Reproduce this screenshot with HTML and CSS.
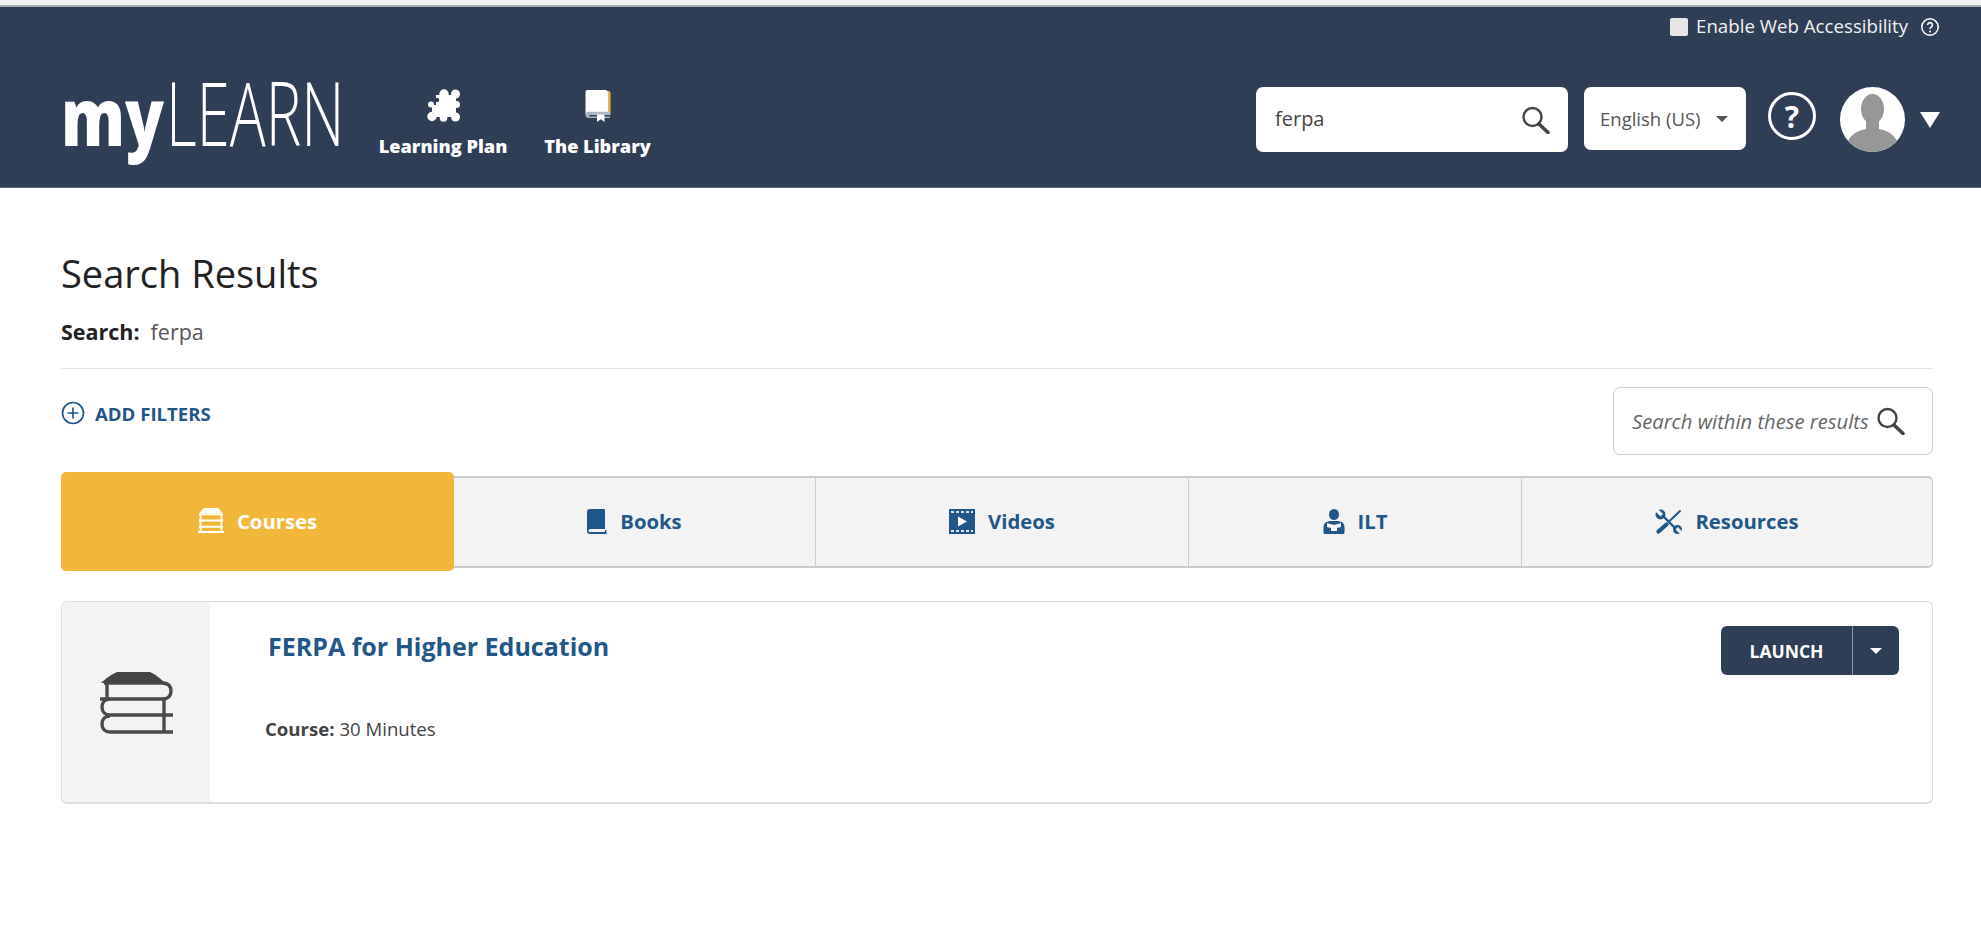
FILE: index.html
```html
<!DOCTYPE html>
<html lang="en">
<head>
<meta charset="utf-8">
<title>myLEARN Search Results</title>
<link rel="stylesheet" href="styles.css">
</head>
<body>
<div class="browser-strip"></div>
<header class="site-header">
  <div class="access-row">
    <span class="access-check"></span>
    <span class="access-label">Enable Web Accessibility</span>
    <svg class="access-help" viewBox="0 0 20 20"><circle cx="10" cy="10" r="8.2" fill="none" stroke="#fff" stroke-width="1.6"/><path d="M7.6 8a2.4 2.4 0 1 1 3.6 2.1c-.8.5-1.2.9-1.2 1.9" fill="none" stroke="#fff" stroke-width="1.6"/><circle cx="10" cy="14.6" r="1" fill="#fff"/></svg>
  </div>
  <div class="main-row">
    <div class="logo"><span class="logo-my">my</span><span class="logo-learn">LEARN</span></div>
    <nav class="nav">
      <a class="nav-item nav-plan">
        <svg class="nav-icon" viewBox="0 0 33 33"><g fill="#fff"><path d="M9 6h20v22H5V16h4z"/><circle cx="17" cy="5" r="4.700"/><circle cx="28.500" cy="5" r="4.500"/><circle cx="29.500" cy="15.500" r="3.500"/><circle cx="28.500" cy="28" r="4.500"/><circle cx="16.500" cy="29" r="3.800"/><circle cx="5" cy="27.500" r="4.700"/><circle cx="4" cy="15.500" r="3"/></g><circle cx="10" cy="11" r="2.200" fill="#2f3e57"/></svg>
        <span>Learning Plan</span>
      </a>
      <a class="nav-item nav-lib">
        <svg class="nav-icon" viewBox="0 0 28 33"><path fill="#e9b44c" d="M22 2h2.500a2 2 0 0 1 2 2v22h-4.500z"/><path fill="#fff" d="M3 1h18a3 3 0 0 1 3 3v19H5.500C3.500 23 2 24.300 1.500 26V3a2 2 0 0 1 1.500-2z"/><path fill="#aeb8c4" d="M1.500 26c0-2 1.500-3.200 3.500-3.200h21V26H5.500a1 1 0 0 0 0 1.600H26V29H5c-2 0-3.500-1.200-3.500-3z"/><path fill="#fff" d="M13 25.500h7.500V33l-3.700-2.700L13 33z"/></svg>
        <span>The Library</span>
      </a>
    </nav>
    <div class="header-tools">
      <div class="header-search">
        <span>ferpa</span>
        <svg class="mag" viewBox="0 0 30 28"><circle cx="11.500" cy="11" r="9" fill="none" stroke="#444" stroke-width="2.400"/><path d="M18 18l9 8.500" stroke="#444" stroke-width="3.600" stroke-linecap="round"/></svg>
      </div>
      <div class="lang">
        <span>English (US)</span>
        <i class="caret caret-dark"></i>
      </div>
      <div class="help">?</div>
      <svg class="avatar" viewBox="0 0 65 65"><circle cx="32.500" cy="32.500" r="32.500" fill="#fff"/><clipPath id="av"><circle cx="32.500" cy="32.500" r="32.500"/></clipPath><g clip-path="url(#av)" fill="#979797"><ellipse cx="32.500" cy="22" rx="11.500" ry="15"/><rect x="26" y="30" width="13" height="14"/><path d="M6 65c0-14 8-21 20-23h13c12 2 20 9 20 23z"/></g></svg>
      <i class="user-arrow"></i>
    </div>
  </div>
</header>

<main class="content">
  <h1 class="page-title">Search Results</h1>
  <p class="search-term"><b>Search:</b><span>ferpa</span></p>
  <hr class="rule">
  <div class="filter-row">
    <a class="add-filters">
      <svg class="plus" viewBox="0 0 24 24"><circle cx="12" cy="12" r="10.500" fill="none" stroke="#1f5788" stroke-width="1.700"/><path d="M12 6.500v11M6.500 12h11" stroke="#1f5788" stroke-width="1.700"/></svg>
      <span>ADD FILTERS</span>
    </a>
    <div class="within">
      <span>Search within these results</span>
      <svg class="mag-small" viewBox="0 0 30 28"><circle cx="11.500" cy="11" r="9" fill="none" stroke="#444" stroke-width="2.400"/><path d="M18 18l9 8.500" stroke="#444" stroke-width="3.600" stroke-linecap="round"/></svg>
    </div>
  </div>
  <div class="tabs">
    <a class="tab tab-active">
      <svg class="tab-icon" viewBox="0 0 25 24"><path fill="#fff" d="M4 1.500C5 .5 6 0 7.500 0h10c1.500 0 2.500.5 3.500 1.500L23.500 5h-22z"/><g fill="none" stroke="#fff" stroke-width="1.800"><path d="M1 6h23M2.500 6v17M22.500 6v17M1 12h23M1 18h23M0 23h25"/></g></svg>
      <span>Courses</span>
    </a>
    <a class="tab">
      <svg class="tab-icon" viewBox="0 0 20 25"><path fill="#1f5788" d="M3 0h14a1 1 0 0 1 1 1v19H3a1.500 1.500 0 0 0 0 3h15v-2h1.500v4H3a3 3 0 0 1-3-3V3a3 3 0 0 1 3-3z"/></svg>
      <span>Books</span>
    </a>
    <a class="tab">
      <svg class="tab-icon" viewBox="0 0 26 25"><path fill="#1f5788" d="M0 0h26v25H0z"/><path fill="#d7e3ee" d="M2 2h3v2H2zM7 2h3v2H7zM12 2h3v2h-3zM17 2h3v2h-3zM22 2h2v2h-2zM2 21h3v2H2zM7 21h3v2H7zM12 21h3v2h-3zM17 21h3v2h-3zM22 21h2v2h-2z"/><path fill="#fff" d="M9 7.500l9 5-9 5z"/></svg>
      <span>Videos</span>
    </a>
    <a class="tab">
      <svg class="tab-icon" viewBox="0 0 22 25"><ellipse cx="11" cy="5.500" rx="5" ry="5.500" fill="#1f5788"/><path fill="#1f5788" d="M1 25c-1-3-1-9 1-11 2-1.500 4-2 6-2h6c2 0 4 .5 6 2 2 2 2 8 1 11z"/><path fill="#f3f3f3" d="M4 14l7 2 7-2v4l-4 1v3h-6v-3l-4-1z"/></svg>
      <span>ILT</span>
    </a>
    <a class="tab">
      <svg class="tab-icon" viewBox="0 0 27 25"><g stroke="#1f5788" fill="none" stroke-linecap="round"><path stroke-width="2.400" d="M7 6l15 15"/><path stroke-width="2" d="M25 2L14 12.500"/><path stroke-width="4.200" d="M11.500 15.500L3.500 22.500"/></g><g fill="#1f5788"><circle cx="5.500" cy="5.500" r="5"/><circle cx="22.500" cy="20.500" r="4.500"/></g><g fill="#f3f3f3"><path d="M0 2l3-2 5 5-2.500 2.500z"/><path d="M27 22.500l-2 2.500-4.500-4.500 2.500-2.500z"/></g></svg>
      <span>Resources</span>
    </a>
  </div>
  <article class="card">
    <div class="card-thumb">
      <svg class="books" viewBox="0 0 73 62"><g fill="none" stroke="#4a4a4a" stroke-width="3.400"><path d="M7 11v16M4 11h58c6 0 9 3 9 8s-3 8-9 8H0"/><path d="M64 27v16M73 43H10c-5 0-8-3-8-8s3-8 8-8"/><path d="M64 43v17M73 60H10c-5 0-8-3-8-8s3-8 8-8"/></g><path fill="#444" d="M1 11C5 7 12 2 17 0h33c5 2 11 7 15 11z"/></svg>
    </div>
    <div class="card-body">
      <div class="card-text">
        <h2 class="card-title">FERPA for Higher Education</h2>
        <p class="card-meta"><b>Course:</b> 30 Minutes</p>
      </div>
      <div class="launch">
        <span class="launch-main">LAUNCH</span>
        <span class="launch-more"><i class="caret caret-light"></i></span>
      </div>
    </div>
  </article>
</main>
</body>
</html>
```

FILE: styles.css
```css
* { box-sizing: border-box; }
html, body { margin: 0; padding: 0; background: #fff; }
body { font-family: "Open Sans", "Liberation Sans", sans-serif; color: #333; height: 943px; overflow: hidden; }
a { display: flex; }

.browser-strip { height: 7px; background: #f1f1f1; border-bottom: 2px solid #a9aaac; }

.site-header { height: 181px; background: #2f3e57; border-bottom: 1px solid #5a6678; color: #fff; }
.access-row { height: 40px; display: flex; align-items: center; justify-content: flex-end; padding-right: 41px; }
.access-check { width: 18px; height: 18px; background: #e6e6e6; border-radius: 2px; margin-right: 8px; }
.access-label { font-size: 18.700px; line-height: 20px; width: 212px; white-space: nowrap; color: #f2f2f2; margin-top: -2px; }
.access-help { width: 20px; height: 20px; margin-left: 12px; }

.main-row { display: flex; align-items: flex-start; margin-top: 40px; padding: 0 41px 0 64px; height: 65px; }
.logo { width: 280px; height: 85px; margin: -17px 0 0 -3px; flex: none; display: flex; align-items: baseline; color: #fff; line-height: 85px; white-space: nowrap; }
.logo-my { display: block; width: 104.500px; flex: none; font-weight: 800; font-size: 80px; transform: scaleX(.8); transform-origin: 0 50%; }
.logo-learn { display: block; width: 175px; flex: none; font-weight: 300; font-size: 88px; transform: scaleX(.68); transform-origin: 0 50%; }

.nav { display: flex; margin-left: 38px; gap: 38px; }
.nav-item { flex-direction: column; align-items: center; font-weight: 800; font-size: 18.200px; line-height: 24px; color: #fff; white-space: nowrap; width: 128px; }
.nav-lib { width: 105px; }
.nav-icon { height: 33px; width: auto; margin-top: 2px; margin-bottom: 12px; }

.header-tools { margin-left: auto; display: flex; align-items: flex-start; }
.header-search { width: 312px; height: 65px; background: #fff; border-radius: 7px; display: flex; align-items: center; justify-content: space-between; padding: 0 17px 0 19px; color: #444; font-size: 20px; }
.header-search span { margin-top: -2px; }
.mag { width: 30px; height: 28px; }
.lang { width: 162px; height: 63px; margin-left: 16px; background: #fff; border-radius: 7px; display: flex; align-items: center; padding-left: 16px; color: #555; font-size: 18.500px; white-space: nowrap; }
.caret { display: block; width: 0; height: 0; border-left: 6px solid transparent; border-right: 6px solid transparent; }
.caret-dark { border-top: 6px solid #555; margin-left: 15px; }
.caret-light { border-top: 6px solid #fff; }
.help { width: 48px; height: 48px; margin: 5px 0 0 22px; border: 3.500px solid #fff; border-radius: 50%; display: flex; align-items: center; justify-content: center; font-weight: 700; font-size: 30px; color: #fff; }
.avatar { width: 65px; height: 65px; margin-left: 24px; }
.user-arrow { display: block; width: 0; height: 0; margin: 25px 0 0 15px; border-left: 10px solid transparent; border-right: 10px solid transparent; border-top: 16px solid #fff; }

.content { padding: 0 48px 0 61px; }
.page-title { margin: 0; padding-top: 60px; font-size: 38px; line-height: 50px; font-weight: 400; color: #222; }
.search-term { margin: 20px 0 0; font-size: 21.500px; line-height: 28px; display: flex; gap: 11px; color: #555; }
.search-term b { color: #222; }
.rule { margin: 22px 0 0; border: 0; border-top: 1px solid #e4e4e4; }
.filter-row { display: flex; justify-content: space-between; align-items: flex-start; margin-top: 18px; }
.add-filters { align-items: center; color: #1f5788; font-size: 18.600px; font-weight: 700; margin-top: 14px; height: 24px; }
.plus { width: 24px; height: 24px; margin-right: 10px; }
.within { width: 320px; height: 68px; border: 1px solid #ccc; border-radius: 7px; display: flex; align-items: center; justify-content: space-between; padding: 0 26px 0 18px; font-style: italic; font-size: 20.200px; color: #666; white-space: nowrap; }
.mag-small { width: 30px; height: 28px; flex: none; }

.tabs { display: grid; grid-template-columns: 392px 361px 373px 333px 1fr; height: 92px; margin-top: 21px; background: #f3f3f3; border: 1px solid #ccc; border-top-width: 2px; border-bottom-width: 2px; border-radius: 5px; }
.tab { align-items: center; justify-content: center; gap: 13px; padding-bottom: 2px; font-size: 20.300px; font-weight: 700; color: #1f5788; border-left: 1px solid #ccc; }
.tab-icon { height: 25px; width: auto; flex: none; }
.tab-active { background: #f2b739; color: #fff; margin: -6px 0 -5px -1px; border: 0; border-radius: 5px; }
.tab-active + .tab { border-left: 0; }

.card { display: flex; height: 203px; margin-top: 33px; border: 1px solid #ddd; border-bottom-width: 2px; border-radius: 6px; overflow: hidden; }
.card-thumb { width: 148px; flex: none; background: #f3f3f3; display: flex; justify-content: center; padding: 70px 0 0 0; }
.books { width: 73px; height: 62px; margin-left: 1px; }
.card-body { flex: 1; display: flex; justify-content: space-between; align-items: flex-start; padding: 23px 33px 0 55px; }
.card-title { margin: 0 0 0 3px; font-size: 25px; line-height: 42px; font-weight: 700; color: #1f5788; }
.card-meta { margin: 50px 0 0; font-size: 18.600px; line-height: 24px; color: #444; }
.launch { display: flex; width: 178px; height: 49px; margin-top: 1px; background: #2f3e57; border-radius: 6px; color: #fff; font-weight: 700; font-size: 17.500px; }
.launch-main { width: 132px; display: flex; align-items: center; justify-content: center; border-right: 1px solid #8b95a5; }
.launch-more { flex: 1; display: flex; align-items: center; justify-content: center; }
```
